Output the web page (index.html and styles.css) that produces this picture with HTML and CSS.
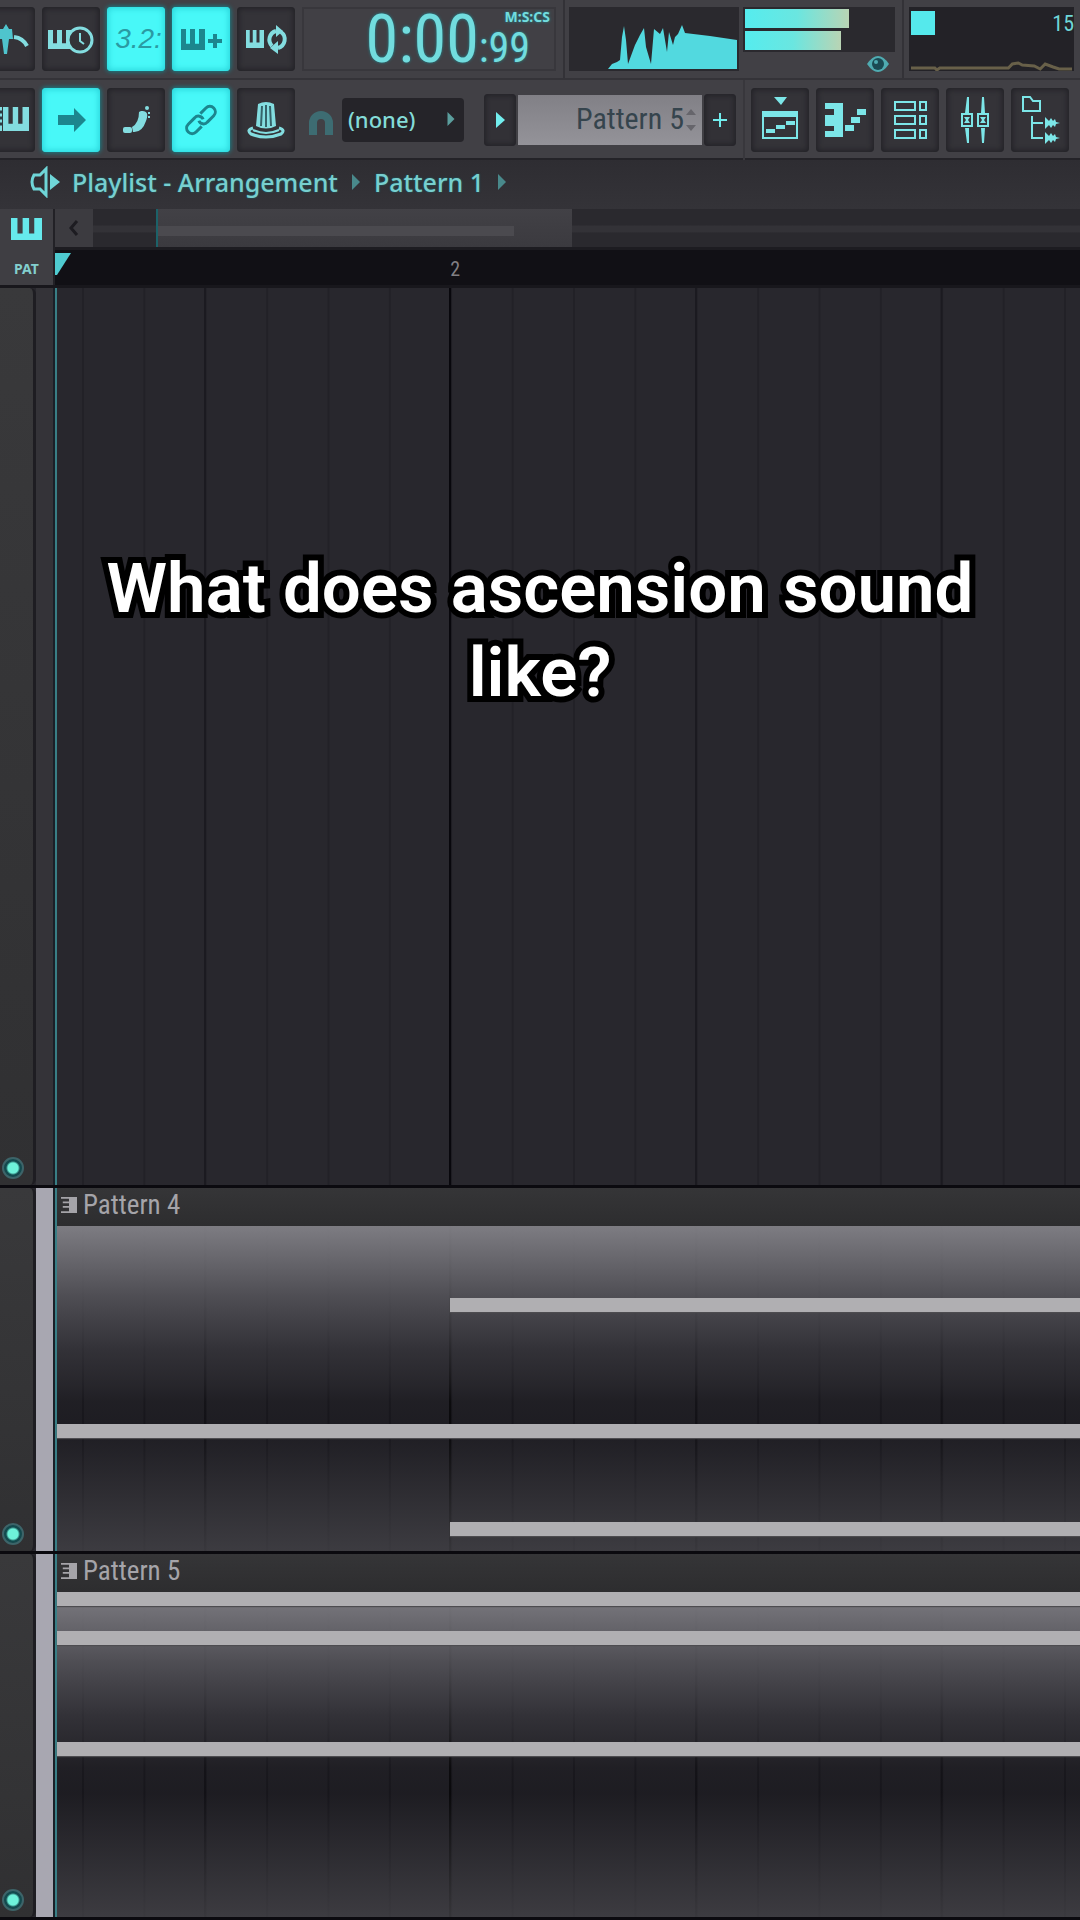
FILE: index.html
```html
<!DOCTYPE html>
<html lang="en">
<head>
    <meta charset="UTF-8">
    <meta name="viewport" content="width=device-width, initial-scale=1.0">
    <title>Playlist - Arrangement</title>
    <link rel="stylesheet" href="styles.css">
</head>
<body>
    <svg class="defs" aria-hidden="true">
        <symbol id="keys" viewBox="0 0 24 20" preserveAspectRatio="none">
            <path d="M0 0h5v14h4V0h5v14h4V0h6v20H0z"/>
        </symbol>
        <symbol id="arrow" viewBox="0 0 8 16">
            <path d="M0 0l8 8-8 8z"/>
        </symbol>
        <symbol id="clip-keys" viewBox="0 0 18 18">
            <path d="M0 0h18v18H0v-2h9v-4H2v-2h7V7H2V5h7V2H0z"/>
        </symbol>
    </svg>

    <div class="app">
        <header class="toolbar">
            <div class="toolbar-row">
                <div class="buttons buttons-cut">
                    <button class="tool" aria-label="Metronome">
                        <svg width="58" height="64" viewBox="0 0 58 64"><path d="M22 22h4l3-5 3 5h3l1 10h-4l-2 15h-3l-2-15h-3z" fill="#4fc4cd"/><path d="M37 30q9 1 13 9" fill="none" stroke="currentColor" stroke-width="4"/></svg>
                    </button>
                    <button class="tool" aria-label="Wait for input">
                        <svg width="58" height="64" viewBox="0 0 58 64"><use href="#keys" x="6" y="23" width="24" height="19"/><circle cx="38" cy="33" r="12" fill="#343338" stroke="currentColor" stroke-width="3"/><path d="M38 26v8l4 3" fill="none" stroke="currentColor" stroke-width="2"/></svg>
                    </button>
                    <button class="tool on" aria-label="Countdown"><span class="count">3.2:</span></button>
                    <button class="tool on" aria-label="Overdub">
                        <svg width="58" height="64" viewBox="0 0 58 64"><use href="#keys" x="9" y="22" width="24" height="21"/><path d="M41 27h4v5h5v4h-5v5h-4v-5h-5v-4h5z"/></svg>
                    </button>
                    <button class="tool" aria-label="Loop record">
                        <svg width="58" height="64" viewBox="0 0 58 64"><use href="#keys" x="9" y="23" width="18" height="18"/><path d="M35 39a9 9 0 0 1 4-15M44 25a9 9 0 0 1-3 16" fill="none" stroke="currentColor" stroke-width="4"/><path d="M39 18l7 6-7 6zM41 34v13l-8-6z"/></svg>
                    </button>
                </div>
                <div class="clock">
                    <span class="clock-main">0:00</span>
                    <div class="clock-side">
                        <small>M:S:CS</small>
                        <span>:99</span>
                    </div>
                </div>
                <div class="meters">
                    <svg class="spectrum" viewBox="0 0 170 64" preserveAspectRatio="none">
                        <path d="M39 62l4-5 5-2 3-2 2-23 2-11 2 14 2 24 7-19 5-10 4-7 2 19 5 17 3-35 6 5 3-6 4 24 2-20 4 13 2-8 3-3 4-9 3 8 25 3 27 4v29z"/>
                    </svg>
                    <div class="peaks">
                        <div class="peak-box">
                            <div class="peak" style="width:70%"></div>
                            <div class="peak" style="width:65%"></div>
                        </div>
                        <svg class="eye" width="24" height="20" viewBox="0 0 24 20"><path d="M1 10Q12-6 23 10 12 26 1 10z"/><circle cx="12" cy="10" r="6" fill="#1b4a53"/><circle cx="10" cy="8" r="2"/></svg>
                    </div>
                </div>
                <div class="cpu">
                    <div class="cpu-box">
                        <div class="cpu-top"><i></i><span>15</span></div>
                        <svg viewBox="0 0 166 20" preserveAspectRatio="none"><path d="M2 17h24l2 2 3-2h69l4-4 6-1 4 2 12 1 6 3 5-5 8 3 6 2h13" fill="none" stroke="#686049" stroke-width="3"/></svg>
                    </div>
                </div>
            </div>

            <div class="toolbar-row">
                <div class="buttons buttons-cut">
                    <button class="tool" aria-label="Typing keyboard">
                        <svg width="58" height="64" viewBox="0 0 58 64"><path d="M14 19h11v24H14z"/><use href="#keys" x="26" y="19" width="26" height="24"/><path d="M18 24h8M18 30h8M18 36h8" stroke="#2c3a40" stroke-width="3"/></svg>
                    </button>
                    <button class="tool on" aria-label="Auto scroll">
                        <svg width="58" height="64" viewBox="0 0 58 64"><path d="M16 27h16v-7l12 12-12 12v-7H16z"/></svg>
                    </button>
                    <button class="tool" aria-label="Step edit">
                        <svg width="58" height="64" viewBox="0 0 58 64"><path d="M34 23q9-1 5 10-4 12-13 11l-1-5q7-4 7-15z"/><rect x="16" y="39" width="9" height="6" rx="2"/><circle cx="40" cy="20" r="2"/><path d="M42 24v7" stroke="currentColor" stroke-width="2" stroke-dasharray="2 2"/></svg>
                    </button>
                    <button class="tool on" aria-label="Link">
                        <svg width="58" height="64" viewBox="0 0 58 64"><g transform="rotate(-45 29 32)" fill="none" stroke="currentColor" stroke-width="3"><path d="M25 37h-8a5 5 0 0 1 0-11h9a5 5 0 0 1 5 7"/><path d="M33 27h8a5 5 0 0 1 0 11h-9a5 5 0 0 1-5-7"/></g></svg>
                    </button>
                    <button class="tool" aria-label="Multilink controllers">
                        <svg width="58" height="64" viewBox="0 0 58 64"><path d="M21 16q8-4 16 0l2 22q-10 5-20 0z"/><path d="M25 18l-1 20M29 17v22M33 18l1 20" stroke="#35636a" stroke-width="2"/><path d="M16 40q-7 2-2 6 15 6 30 0 5-4-2-6" fill="none" stroke="currentColor" stroke-width="3"/><path d="M16 42q13 6 26 0" fill="none" stroke="currentColor" stroke-width="2"/></svg>
                    </button>
                </div>
                <div class="pattern-tools">
                    <svg class="magnet" width="24" height="26" viewBox="0 0 24 26"><path d="M4 24V12a8 8 0 0 1 16 0v12" fill="none" stroke="currentColor" stroke-width="8"/></svg>
                    <div class="snap">
                        <select aria-label="Snap"><option>(none)</option></select>
                        <svg width="8" height="14"><use href="#arrow"/></svg>
                    </div>
                    <div class="pattern-picker">
                        <button class="mini" aria-label="Pattern menu"><svg width="9" height="16" viewBox="0 0 8 16" preserveAspectRatio="none"><path d="M0 0l8 8-8 8z"/></svg></button>
                        <div class="pattern-field">
                            <input type="text" value="Pattern 5" aria-label="Pattern">
                            <svg width="10" height="24" viewBox="0 0 10 24"><path d="M0 7l5-6 5 6zM0 17l5 6 5-6z"/></svg>
                        </div>
                        <button class="mini" aria-label="Add pattern"><svg width="14" height="14" viewBox="0 0 14 14"><path d="M6 0h2v6h6v2H8v6H6V8H0V6h6z"/></svg></button>
                    </div>
                </div>
                <div class="buttons windows">
                    <button class="tool" aria-label="Playlist">
                        <svg width="58" height="64" viewBox="0 0 58 64"><path d="M23 9h13l-6 8zM11 23h36v28H11zm2 6v20h32V29z" fill-rule="evenodd"/><path d="M15 41h9v4h-9zM25 37h9v4h-9zM35 33h9v4h-9z"/></svg>
                    </button>
                    <button class="tool" aria-label="Piano roll">
                        <svg width="58" height="64" viewBox="0 0 58 64"><path d="M9 15h18v34H9v-6h9v-5H9V27h9v-6H9z"/><path d="M29 37h9v6h-9zM35 29h9v6h-9zM41 21h9v6h-9z"/></svg>
                    </button>
                    <button class="tool" aria-label="Channel rack">
                        <svg width="58" height="64" viewBox="0 0 58 64"><path d="M14 14h20v8H14zM39 14h6v8h-6zM14 28h20v8H14zM39 28h6v8h-6zM14 42h20v8H14zM39 42h6v8h-6z" fill="none" stroke="currentColor" stroke-width="2"/></svg>
                    </button>
                    <button class="tool" aria-label="Mixer">
                        <svg width="58" height="64" viewBox="0 0 58 64"><path d="M16 26h10v12H16zM32 26h10v12H32z" fill="none" stroke="currentColor" stroke-width="2"/><path d="M21 9h2v16h-4zM36 9h2l1 16h-4zM19 40h4v15h-2zM35 40h4l-1 15h-2zM18 29h6l-2 3 2 3h-6l2-3zM34 29h6l-2 3 2 3h-6l2-3z"/></svg>
                    </button>
                    <button class="tool" aria-label="Browser">
                        <svg width="58" height="64" viewBox="0 0 58 64"><path d="M12 9h7l3 4h7v10H12zM21 28v22h11M21 35h11" fill="none" stroke="currentColor" stroke-width="2"/><path d="M34 29l4 4 2-3 2 3 2-2 1 3 4 1-4 1-1 3-2-2-2 3-2-3-4 4zM34 44l4 4 2-3 2 3 2-2 1 3 4 1-4 1-1 3-2-2-2 3-2-3-4 4z"/></svg>
                    </button>
                </div>
            </div>
        </header>

        <nav class="crumbs">
            <svg width="30" height="32" viewBox="0 0 30 32"><path d="M16 3v26l-6-6H4q-4-7 0-14h6z" fill="none" stroke="currentColor" stroke-width="3"/><path d="M20 8l10 8-10 8z"/></svg>
            <a href="#">Playlist - Arrangement</a>
            <svg class="sep" width="8" height="16"><use href="#arrow"/></svg>
            <a href="#">Pattern 1</a>
            <svg class="sep" width="8" height="16"><use href="#arrow"/></svg>
        </nav>

        <div class="timeline">
            <button class="mode">
                <svg width="31" height="22"><use href="#keys"/></svg>
                <span>PAT</span>
            </button>
            <div class="timeline-main">
                <div class="scroll">
                    <button class="scroll-left" aria-label="Scroll left"><svg width="10" height="16" viewBox="0 0 10 16"><path d="M8 1L2 8l6 7" fill="none" stroke="#1d1c21" stroke-width="3"/></svg></button>
                    <div class="scroll-track"><div class="thumb"><i></i></div></div>
                </div>
                <div class="ruler">
                    <svg width="16" height="22" viewBox="0 0 16 22"><path d="M0 0h16L2 22H0z"/></svg>
                    <span>2</span>
                </div>
            </div>
        </div>

        <main class="tracks">
            <section class="track track-empty">
                <div class="track-head"><input type="checkbox" checked aria-label="Track 1"></div>
                <div class="strip"></div>
                <div class="lane"></div>
            </section>

            <section class="track colored">
                <div class="track-head"><input type="checkbox" checked aria-label="Track 2"></div>
                <div class="strip"></div>
                <div class="lane">
                    <div class="clip-title"><svg width="16" height="18" viewBox="0 0 18 18"><use href="#clip-keys"/></svg>Pattern 4</div>
                    <div class="clip-body">
                        <div class="note" style="top:22%;left:38.4%"></div>
                        <div class="note" style="top:61%;left:0"></div>
                        <div class="note" style="top:91%;left:38.4%"></div>
                    </div>
                </div>
            </section>

            <section class="track colored">
                <div class="track-head"><input type="checkbox" checked aria-label="Track 3"></div>
                <div class="strip"></div>
                <div class="lane">
                    <div class="clip-title"><svg width="16" height="18" viewBox="0 0 18 18"><use href="#clip-keys"/></svg>Pattern 5</div>
                    <div class="clip-body">
                        <div class="note" style="top:0;left:0"></div>
                        <div class="note" style="top:12%;left:0"></div>
                        <div class="note" style="top:46%;left:0"></div>
                    </div>
                </div>
            </section>
        </main>

        <h1 class="caption">What does ascension sound like?</h1>
    </div>
</body>
</html>
```
FILE: styles.css
```css
* {
    margin: 0;
    padding: 0;
    box-sizing: border-box;
}

body {
    background-color: #28272d;
    color: #6fd6d8;
    font-family: "Noto Sans", "Open Sans", sans-serif;
}

button {
    border: none;
    background: none;
    color: inherit;
    font: inherit;
    cursor: pointer;
}

svg {
    display: block;
    fill: currentColor;
    flex: none;
}

.defs {
    position: absolute;
    width: 0;
    height: 0;
}

.app {
    position: relative;
    min-height: 100vh;
    display: flex;
    flex-direction: column;
    overflow: hidden;
}

/* toolbar */
.toolbar {
    background-color: #414045;
    box-shadow: inset 0 -2px 0 #242328;
}

.toolbar-row {
    display: flex;
    height: 80px;
}

.toolbar-row:first-child {
    border-bottom: 2px solid #343338;
}

.buttons {
    display: flex;
    align-items: center;
    gap: 7px;
    flex: none;
}

.buttons-cut {
    margin-left: -23px;
}

.tool {
    width: 58px;
    height: 64px;
    border-radius: 4px;
    background-color: #343338;
    box-shadow: inset 0 0 5px 2px #242328;
    color: #83dde0;
    overflow: hidden;
}

.tool.on {
    background-color: #48f8f8;
    box-shadow: inset 0 0 6px 1px #27d2d8, 0 0 4px 1px #187e87;
    color: #1c868e;
}

.count {
    display: block;
    padding-left: 5px;
    overflow: hidden;
    font-family: "Liberation Sans", sans-serif;
    font-size: 28px;
    font-style: italic;
    color: #2a9ba3;
}

.clock {
    flex: none;
    display: flex;
    justify-content: flex-end;
    width: 254px;
    height: 64px;
    margin: 7px 7px 0;
    padding-right: 24px;
    border: 2px solid #38373c;
    font-family: "Roboto Condensed", "Liberation Sans Narrow", "Noto Sans", sans-serif;
    color: #72dcde;
    text-shadow: 0 0 3px #1d8d96;
}

.clock-main {
    font-size: 66px;
    line-height: 62px;
}

.clock-side {
    display: flex;
    flex-direction: column;
}

.clock-side small {
    align-self: flex-end;
    margin-right: -20px;
    font-family: "Noto Sans", sans-serif;
    font-size: 14px;
    font-weight: 700;
    line-height: 16px;
}

.clock-side span {
    font-size: 42px;
    line-height: 46px;
}

.meters {
    flex: none;
    display: flex;
    gap: 4px;
    padding: 7px 7px 0 4px;
    border-left: 2px solid #333237;
}

.spectrum {
    width: 170px;
    height: 64px;
    background-color: #2a292e;
    color: #52d9df;
}

.peaks {
    width: 152px;
}

.peak-box {
    display: flex;
    flex-direction: column;
    gap: 3px;
    height: 45px;
    padding: 2px;
    background-color: #2a292e;
}

.peak {
    height: 19px;
    background: linear-gradient(90deg, #55ecee, #6ae6e0 50%, #b9d4b4);
}

.eye {
    margin: 2px 5px 0 auto;
    color: #4fabb1;
}

.cpu {
    flex: 1;
    padding: 7px 6px 0 5px;
    border-left: 2px solid #333237;
}

.cpu-box {
    height: 64px;
    background-color: #232227;
}

.cpu-top {
    display: flex;
    justify-content: space-between;
    align-items: center;
    height: 32px;
    padding-left: 2px;
    font-family: "Roboto Condensed", "Liberation Sans Narrow", "Noto Sans", sans-serif;
    font-size: 22px;
}

.cpu-top i {
    width: 24px;
    height: 24px;
    background-color: #55e9ec;
}

.cpu-box svg {
    width: 100%;
    height: 20px;
    margin-top: 12px;
}

/* pattern selector */
.pattern-tools {
    flex: none;
    display: flex;
    align-items: center;
    padding: 0 7px 0 14px;
    border-right: 2px solid #38373c;
}

.magnet {
    margin-top: 8px;
    color: #3d6c72;
}

.snap {
    display: flex;
    align-items: center;
    width: 122px;
    height: 44px;
    margin: 0 20px 0 9px;
    padding: 0 9px 2px 6px;
    border-radius: 4px;
    background-color: #252429;
    color: #5b9e9d;
}

.snap select {
    flex: 1;
    appearance: none;
    border: none;
    background: none;
    color: #84dcd8;
    font: 500 22px "Noto Sans", sans-serif;
}

.pattern-picker {
    display: flex;
    align-items: center;
    gap: 2px;
}

.mini {
    display: flex;
    align-items: center;
    justify-content: center;
    width: 32px;
    height: 52px;
    border-radius: 4px;
    background-color: #323136;
    box-shadow: inset 0 0 4px 2px #252429;
    color: #72eeee;
}

.pattern-field {
    display: flex;
    align-items: center;
    width: 184px;
    height: 50px;
    padding-right: 4px;
    background: linear-gradient(#818086, #949399);
    color: #66656b;
}

.pattern-field input {
    width: 168px;
    padding: 0 2px 3px 0;
    border: none;
    background: none;
    color: #35444d;
    font-family: "Roboto Condensed", "Liberation Sans Narrow", "Noto Sans", sans-serif;
    font-size: 30px;
    text-align: right;
}

.windows {
    padding-left: 6px;
}

.windows .tool {
    color: #7ce6e8;
}

/* breadcrumbs */
.crumbs {
    display: flex;
    align-items: center;
    gap: 12px;
    height: 49px;
    padding: 0 0 5px 30px;
    background: linear-gradient(#2e2d32, #343338);
}

.crumbs a {
    color: #78cfcf;
    font-size: 25px;
    font-weight: 500;
    line-height: 36px;
    text-decoration: none;
    text-shadow: 0 0 2px #176d75;
}

.sep {
    margin: 0 2px;
    color: #49898b;
}

/* timeline */
.timeline {
    display: flex;
    height: 79px;
    border-bottom: 3px solid #18171c;
}

.mode {
    display: flex;
    flex-direction: column;
    align-items: center;
    gap: 19px;
    width: 55px;
    padding-top: 9px;
    border-right: 2px solid #222126;
    background-color: #3f3e43;
    color: #66e9ec;
}

.mode span {
    color: #83cfce;
    font-size: 14px;
    font-weight: 700;
    line-height: 20px;
}

.timeline-main {
    flex: 1;
}

.scroll {
    display: flex;
    height: 41px;
    background: linear-gradient(#2a292e 42%, #333237 45%, #333237 60%, #2a292e 63%);
    border-bottom: 3px solid #1d1c21;
}

.scroll-left {
    display: flex;
    align-items: center;
    justify-content: center;
    width: 38px;
    background-color: #3c3b40;
}

.scroll-track {
    flex: 1;
    padding-left: 63px;
}

.thumb {
    width: 45%;
    height: 38px;
    padding-top: 17px;
    border-left: 2px solid #1c6269;
    background: linear-gradient(#424146, #3b3a3f);
}

.thumb i {
    display: block;
    width: 86%;
    height: 10px;
    background-color: #4b4a4f;
}

.ruler {
    display: flex;
    height: 35px;
    padding-top: 3px;
    background-color: #111015;
    color: #4fcbd0;
}

.ruler span {
    margin-left: 37%;
    color: #817f83;
    font-family: "Roboto Condensed", "Liberation Sans Narrow", "Noto Sans", sans-serif;
    font-size: 20px;
    line-height: 32px;
}

/* tracks */
.tracks {
    flex: 1;
    display: flex;
    flex-direction: column;
}

.track {
    display: flex;
    height: 366px;
    border-bottom: 3px solid #0b0a0f;
}

.track-empty {
    flex: 1;
    height: auto;
}

.track-head {
    display: flex;
    align-items: flex-end;
    width: 36px;
    padding: 0 0 6px 2px;
    border-right: 3px solid #1e1d22;
    border-radius: 0 6px 6px 0;
    background: linear-gradient(#39393b, #303032);
}

.track-head input {
    appearance: none;
    width: 22px;
    height: 22px;
    border: 2px solid #3d6469;
    border-radius: 50%;
    background: radial-gradient(#6ef2da 5px, #134a4e 7px);
}

.strip {
    width: 19px;
    border-right: 2px solid #1a2028;
    background-color: #343338;
}

.colored .strip {
    background-color: #a8a7b1;
}

.lane {
    flex: 1;
    display: flex;
    flex-direction: column;
    border-left: 2px solid #397f86;
    background-color: #28272d;
    background-image:
        linear-gradient(90deg, #08070c 2px, transparent 2px),
        linear-gradient(90deg, #1b1a20 2px, transparent 2px),
        linear-gradient(90deg, #222127 2px, transparent 2px);
    background-size: 100% 100%, 24% 100%, 6% 100%;
    background-position: 392px 0, 147px 0, 25px 0;
    background-repeat: no-repeat, repeat-x, repeat-x;
}

.colored .lane {
    background-image:
        linear-gradient(90deg, #000 2px, transparent 2px),
        linear-gradient(90deg, #111015 2px, transparent 2px),
        linear-gradient(90deg, #1b1a20 2px, transparent 2px);
}

.clip-title {
    display: flex;
    align-items: center;
    gap: 6px;
    height: 38px;
    padding: 0 0 4px 4px;
    background: linear-gradient(#353537, #2d2d2f);
    color: #a5a4a9;
    font-family: "Roboto Condensed", "Liberation Sans Narrow", "Noto Sans", sans-serif;
    font-size: 27px;
    line-height: 34px;
}

.clip-body {
    position: relative;
    flex: 1;
    background: linear-gradient(
        rgba(128, 127, 133, 0.97),
        rgba(82, 81, 87, 0.9) 22%,
        rgba(54, 53, 59, 0.75) 38%,
        rgba(38, 37, 42, 0.6) 49%,
        rgba(24, 23, 28, 0.5) 54%,
        rgba(19, 18, 23, 0.5) 62%,
        rgba(64, 63, 68, 0.85)
    );
}

.note {
    position: absolute;
    right: 0;
    height: 14px;
    background-color: #b0afb2;
    box-shadow: 0 1px 1px #4d4c50;
}

.caption {
    position: absolute;
    top: 28%;
    left: 0;
    width: 100%;
    padding: 9px 80px;
    color: #fff;
    font-family: Roboto, "Liberation Sans", sans-serif;
    font-size: 69px;
    font-weight: 600;
    line-height: 84px;
    text-align: center;
    -webkit-text-stroke: 12px #000;
    paint-order: stroke fill;
    stroke-linejoin: round;
}
```
